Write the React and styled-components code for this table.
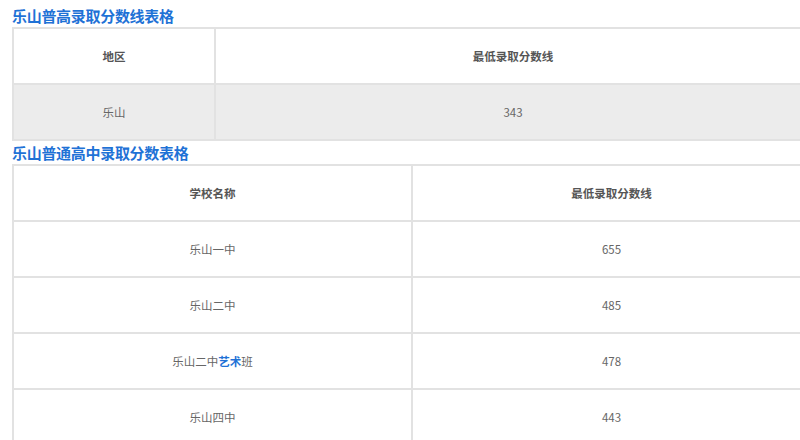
import React from "react";
import styled, { createGlobalStyle } from "styled-components";

const GlobalStyle = createGlobalStyle`
  html, body {
    margin: 0;
    padding: 0;
    background: #fff;
    overflow: hidden;
  }
  body {
    font-family: "Noto Sans CJK SC", "Noto Sans", sans-serif;
  }
`;

const Page = styled.div`
  width: 812px;
  padding: 4px 0 0 12px;
`;

const Title = styled.h3`
  margin: 0;
  height: 23px;
  line-height: 23px;
  font-size: 15px;
  font-weight: 700;
  color: #1f72d6;
  letter-spacing: -0.3px;
`;

const Table = styled.table`
  width: 800px;
  border-collapse: collapse;
  table-layout: fixed;
  font-size: 11.5px;
  color: #555;
`;

const Row = styled.tr`
  background: ${(p) => (p.$shaded ? "#ececec" : "#fff")};
`;

const Cell = styled.td`
  height: 54px;
  border: 2px solid #e2e2e2;
  text-align: center;
  vertical-align: middle;
  padding: 0;
  font-weight: ${(p) => (p.$head ? 700 : 400)};
  color: ${(p) => (p.$head ? "#555" : "#666")};
`;

const Link = styled.span`
  color: #1f72d6;
  font-weight: 700;
`;

const schools = [
  ["乐山一中", "655"],
  ["乐山二中", "485"],
  [
    <>
      乐山二中<Link>艺术</Link>班
    </>,
    "478",
  ],
  ["乐山四中", "443"],
];

export default function App() {
  return (
    <Page>
      <GlobalStyle />
      <Title>乐山普高录取分数线表格</Title>
      <Table>
        <colgroup>
          <col style={{ width: "202px" }} />
          <col />
        </colgroup>
        <tbody>
          <Row>
            <Cell $head>地区</Cell>
            <Cell $head>最低录取分数线</Cell>
          </Row>
          <Row $shaded>
            <Cell>乐山</Cell>
            <Cell>343</Cell>
          </Row>
        </tbody>
      </Table>
      <Title>乐山普通高中录取分数表格</Title>
      <Table>
        <colgroup>
          <col style={{ width: "399px" }} />
          <col />
        </colgroup>
        <tbody>
          <Row>
            <Cell $head>学校名称</Cell>
            <Cell $head>最低录取分数线</Cell>
          </Row>
          {schools.map(([name, score], i) => (
            <Row key={i}>
              <Cell>{name}</Cell>
              <Cell>{score}</Cell>
            </Row>
          ))}
        </tbody>
      </Table>
    </Page>
  );
}
